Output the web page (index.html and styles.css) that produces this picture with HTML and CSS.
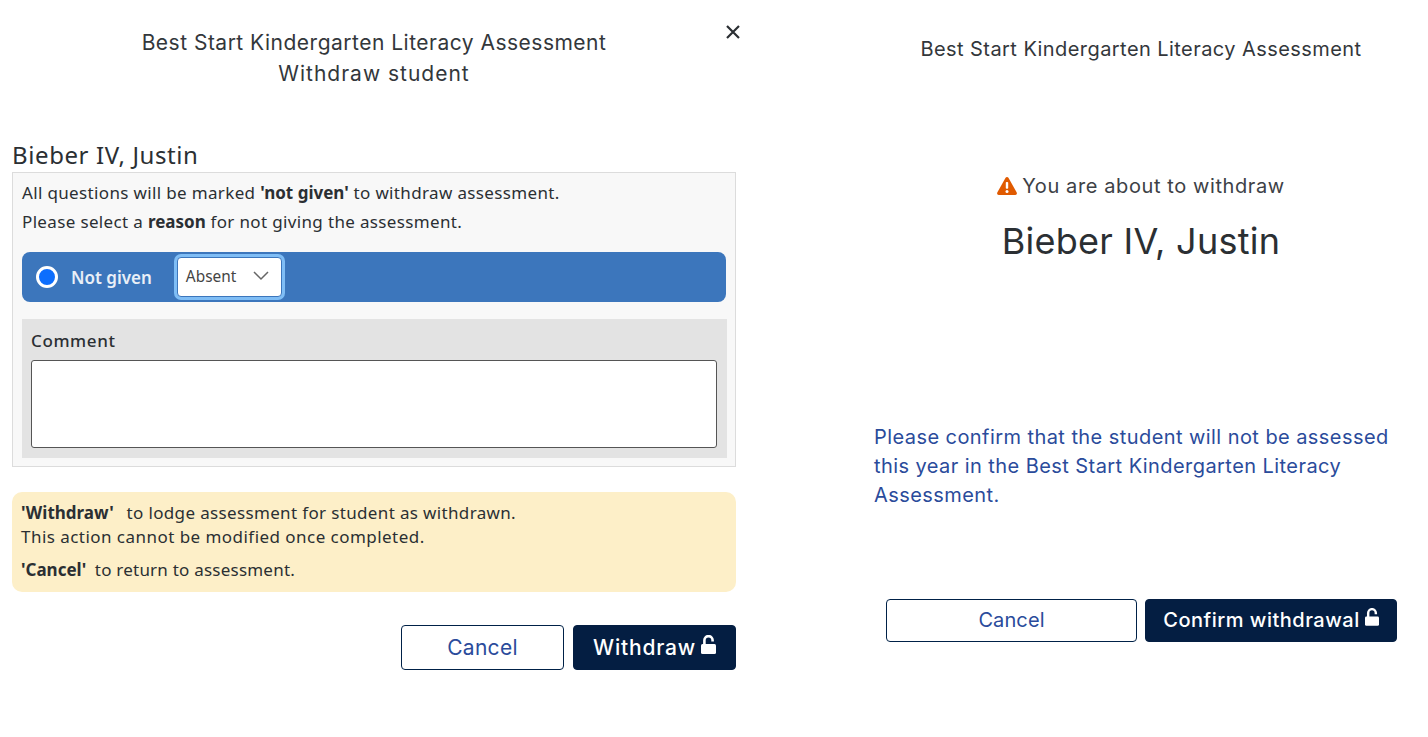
FILE: index.html
```html
<!DOCTYPE html>
<html lang="en">
  <head>
    <meta charset="UTF-8" />
    <meta name="viewport" content="width=device-width, initial-scale=1.0" />
    <title>Withdraw student</title>
    <link rel="stylesheet" href="styles.css">
  </head>
  <body>
    <div class="page">
      <section class="withdraw-form">
        <div class="form-header">
          <h1>Best Start Kindergarten Literacy Assessment<br /><span class="sub-title">Withdraw student</span></h1>
          <button class="close-btn" aria-label="Close">
            <svg width="16" height="16" viewBox="0 0 16 16"><path d="M2 2 14 14M14 2 2 14" stroke="#2b2f33" stroke-width="2.2" fill="none" /></svg>
          </button>
        </div>

        <h2 class="student-name">Bieber IV, Justin</h2>

        <div class="reason-box">
          <p class="intro">All questions will be marked <strong>'not given'</strong> to withdraw assessment.</p>
          <p class="intro">Please select a <strong>reason</strong> for not giving the assessment.</p>

          <div class="reason-bar">
            <span class="radio"></span>
            <span class="reason-label">Not given</span>
            <div class="select-box">
              <span>Absent</span>
              <svg width="16" height="10" viewBox="0 0 16 10"><path d="M1 1 8 8 15 1" stroke="#666" stroke-width="1.5" fill="none" /></svg>
            </div>
          </div>

          <div class="comment-block">
            <label for="comment">Comment</label>
            <textarea id="comment"></textarea>
          </div>
        </div>

        <div class="notice">
          <p><strong>'Withdraw'</strong> <span class="gap-lg">to lodge assessment for student as withdrawn.</span></p>
          <p class="notice-wide">This action cannot be modified once completed.</p>
          <p class="notice-last"><strong>'Cancel'</strong> <span class="gap-sm">to return to assessment.</span></p>
        </div>

        <div class="form-actions">
          <button class="button cancel">Cancel</button>
          <button class="button primary">
            Withdraw
            <svg class="lock" width="15" height="19" viewBox="0 0 15 19"><path d="M3.400 10V5.200a4.100 4.100 0 0 1 8.200 0V6.500" stroke="#fff" stroke-width="2.600" fill="none" /><rect y="9" width="15" height="10" rx="1.500" fill="#fff" /></svg>
          </button>
        </div>
      </section>

      <section class="confirm-panel">
        <h1>Best Start Kindergarten Literacy Assessment</h1>

        <p class="warning">
          <svg width="20" height="18" viewBox="0 0 20 18"><path d="M10 0c.6 0 1.100.3 1.400.8l8.300 14.700c.6 1.100-.1 2.500-1.400 2.500H1.700C.4 18-.3 16.600.3 15.500L8.600.8C8.900.3 9.400 0 10 0z" fill="#e05a00" /><rect x="8.800" y="5" width="2.400" height="6.800" rx=".8" fill="#fff" /><circle cx="10" cy="14.500" r="1.500" fill="#fff" /></svg>
          You are about to withdraw
        </p>
        <h2 class="confirm-name">Bieber IV, Justin</h2>

        <p class="confirm-text">Please confirm that the student will not be assessed this year in the Best Start Kindergarten Literacy Assessment.</p>

        <div class="confirm-actions">
          <button class="button cancel">Cancel</button>
          <button class="button primary">
            Confirm withdrawal
            <svg class="lock" width="14" height="18" viewBox="0 0 15 19"><path d="M3.400 10V5.200a4.100 4.100 0 0 1 8.200 0V6.500" stroke="#fff" stroke-width="2.600" fill="none" /><rect y="9" width="15" height="10" rx="1.500" fill="#fff" /></svg>
          </button>
        </div>
      </section>
    </div>
  </body>
</html>
```

FILE: styles.css
```css
body {
  margin: 0;
  background-color: #fff;
  color: #2b2f33;
  font-family: "Noto Sans", "Open Sans", sans-serif;
  font-size: 17px;
  letter-spacing: 0.35px;
}
p {
  margin: 0;
}
strong {
  letter-spacing: 0;
}
.page {
  display: flex;
  align-items: flex-start;
}
h1,
h2 {
  margin: 0;
  font-weight: 400;
}

/* left side */
.withdraw-form {
  width: 724px;
  margin-left: 12px;
}
.form-header {
  position: relative;
  height: 142px;
  padding-top: 27px;
  box-sizing: border-box;
}
.form-header h1,
.confirm-panel h1 {
  font-family: Inter, sans-serif;
  font-size: 21px;
  line-height: 31px;
  letter-spacing: 0.49px;
  text-align: center;
  color: #33373b;
}
.sub-title {
  letter-spacing: 1px;
}
.close-btn {
  position: absolute;
  top: 24px;
  right: -5px;
  padding: 0;
  border: none;
  background: none;
  line-height: 0;
}
.student-name {
  height: 30px;
  font-family: "Noto Sans", sans-serif;
  font-size: 24px;
  line-height: 26px;
  letter-spacing: 0.6px;
  color: #2b2f33;
}
.reason-box {
  box-sizing: border-box;
  height: 295px;
  padding: 5px 9px 0;
  background-color: #f8f8f8;
  border: 1px solid #dcdcdc;
}
.intro {
  line-height: 29px;
}
.reason-bar {
  display: flex;
  align-items: center;
  height: 50px;
  margin-top: 16px;
  padding-left: 14px;
  background-color: #3c76bc;
  border-radius: 8px;
  box-sizing: border-box;
}
.radio {
  box-sizing: border-box;
  width: 22px;
  height: 22px;
  background-color: #0d6efd;
  border: 3px solid #fff;
  border-radius: 50%;
}
.reason-label {
  margin-left: 13px;
  color: #e9eff7;
  font-weight: 600;
  letter-spacing: 0;
}
.select-box {
  box-sizing: border-box;
  display: flex;
  align-items: center;
  justify-content: space-between;
  width: 105px;
  height: 40px;
  margin-left: 25px;
  padding: 0 12px 2px 8px;
  background-color: #fff;
  border: 1px solid #3c76bc;
  border-radius: 4px;
  box-shadow: 0 0 0 3px #7fbdf5;
  font-size: 15.4px;
  letter-spacing: 0;
  color: #444;
}
.comment-block {
  display: flex;
  flex-direction: column;
  box-sizing: border-box;
  height: 139px;
  margin-top: 17px;
  margin-right: -1px;
  padding: 10px 10px 10px 9px;
  background-color: #e3e3e3;
}
.comment-block label {
  font-weight: 500;
  line-height: 24px;
  letter-spacing: 0.6px;
  margin-bottom: 7px;
}
.comment-block textarea {
  box-sizing: border-box;
  width: 100%;
  height: 89px;
  padding: 4px;
  background-color: #fff;
  border: 1px solid #555;
  border-radius: 3px;
  resize: none;
}
.notice {
  box-sizing: border-box;
  height: 100px;
  margin-top: 25px;
  padding: 9px 9px 0;
  background-color: #fdefc8;
  border-radius: 10px;
  line-height: 24px;
}
.notice-wide {
  letter-spacing: 0.46px;
}
.notice-last {
  margin-top: 9px;
  letter-spacing: 0.22px;
}
.gap-lg {
  margin-left: 8px;
}
.gap-sm {
  margin-left: 4px;
}
.form-actions {
  display: flex;
  justify-content: flex-end;
  gap: 9px;
  margin-top: 33px;
}
.form-actions .button {
  width: 163px;
  height: 45px;
  font-size: 21px;
  letter-spacing: 0.3px;
}
.form-actions .primary {
  letter-spacing: 0.8px;
}

/* buttons */
.button {
  box-sizing: border-box;
  padding: 0;
  border-radius: 4px;
  font-family: Inter, sans-serif;
  cursor: pointer;
}
.button.cancel {
  background-color: #fff;
  border: 1px solid #002147;
  color: #2a4b9b;
}
.button.primary {
  display: flex;
  align-items: center;
  justify-content: center;
  gap: 5px;
  background-color: #041e42;
  border: 1px solid #041e42;
  color: #fff;
  font-weight: 500;
}
.lock {
  margin-top: -6px;
}

/* right side */
.confirm-panel {
  width: 534px;
  margin-left: 138px;
}
.confirm-panel h1 {
  margin-top: 34px;
  font-size: 20px;
  letter-spacing: 0.43px;
}
.warning {
  display: flex;
  align-items: center;
  justify-content: center;
  gap: 5px;
  margin-top: 108px;
  font-family: Inter, sans-serif;
  font-size: 20px;
  line-height: 26px;
  letter-spacing: 0.6px;
  color: #3d4146;
}
.confirm-name {
  margin-top: 20px;
  font-family: Inter, sans-serif;
  font-size: 36px;
  line-height: 44px;
  letter-spacing: 0.27px;
  text-align: center;
}
.confirm-text {
  max-width: 518px;
  margin-top: 160px;
  font-family: Inter, sans-serif;
  font-size: 20px;
  line-height: 29px;
  letter-spacing: 0.43px;
  color: #2a4b9b;
}
.confirm-actions {
  display: flex;
  gap: 8px;
  margin-top: 89px;
  margin-left: 12px;
}
.confirm-actions .button {
  height: 43px;
  padding-bottom: 2px;
  font-size: 20px;
  letter-spacing: 0.1px;
}
.confirm-actions .cancel {
  width: 251px;
}
.confirm-actions .primary {
  width: 252px;
  letter-spacing: 0.5px;
}
```
